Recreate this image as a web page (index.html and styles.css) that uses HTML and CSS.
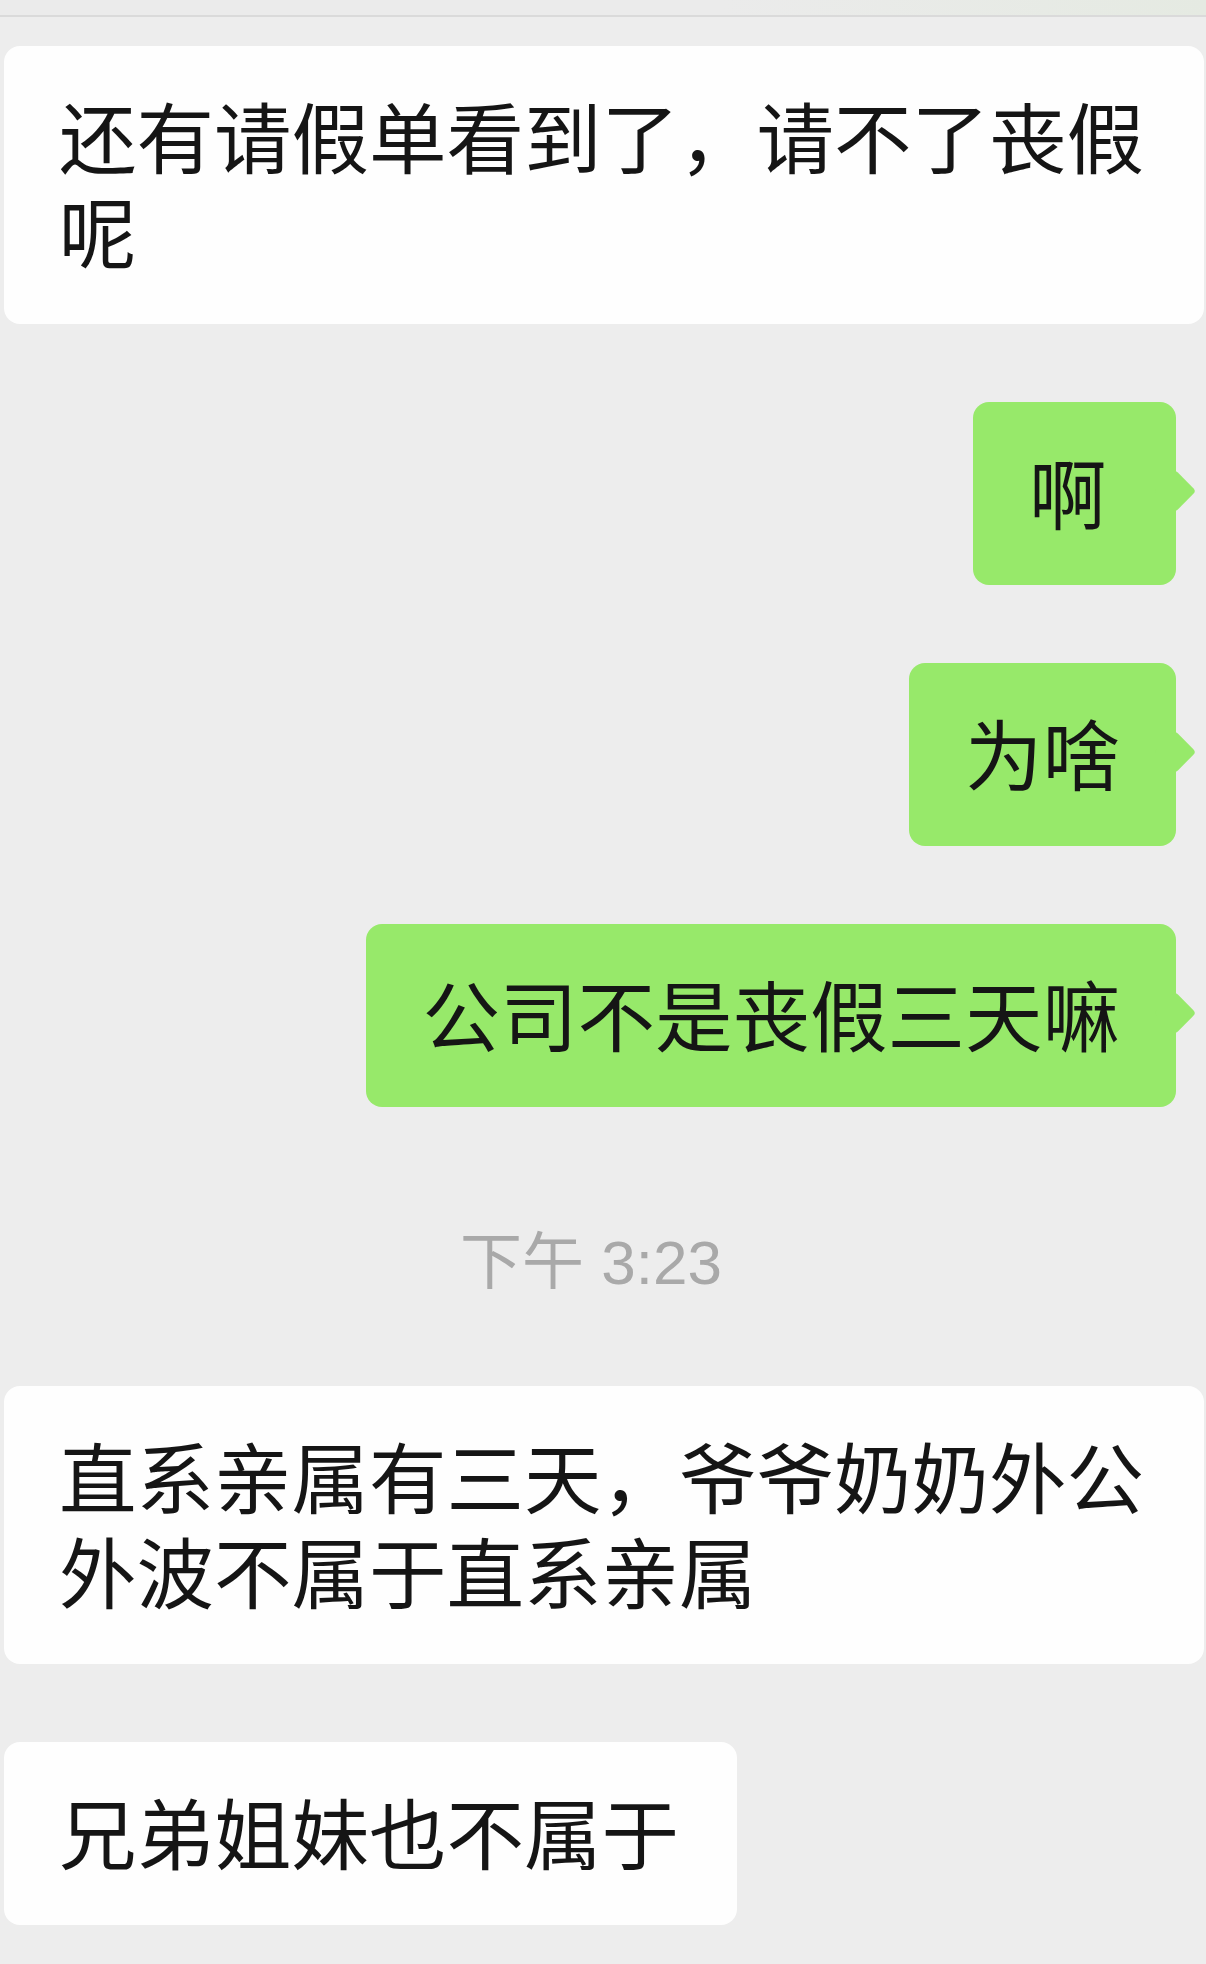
FILE: index.html
```html
<!DOCTYPE html>
<html lang="zh-CN">
<head>
    <meta charset="UTF-8">
    <meta name="viewport" content="width=device-width, initial-scale=1.0">
    <title>聊天记录</title>
    <link rel="stylesheet" href="styles.css">
</head>
<body>
    <div class="top-strip"></div>

    <div class="chat">
        <div class="msg msg-left">
            <div class="bubble bubble-white bubble-wide">还有请假单看到了，请不了丧假呢</div>
        </div>

        <div class="msg msg-right">
            <div class="bubble bubble-green">啊</div>
        </div>

        <div class="msg msg-right">
            <div class="bubble bubble-green">为啥</div>
        </div>

        <div class="msg msg-right">
            <div class="bubble bubble-green">公司不是丧假三天嘛</div>
        </div>

        <div class="time">下午 3:23</div>

        <div class="msg msg-left">
            <div class="bubble bubble-white bubble-wide">直系亲属有三天，爷爷奶奶外公外波不属于直系亲属</div>
        </div>

        <div class="msg msg-left">
            <div class="bubble bubble-white">兄弟姐妹也不属于</div>
        </div>
    </div>
</body>
</html>
```

FILE: styles.css
```css
body {
    margin: 0;
    background-color: #ededed;
    font-family: "Noto Sans CJK SC", "Noto Sans", sans-serif;
    color: #151515;
}
.top-strip {
    height: 15px;
    background: linear-gradient(to right, #ebebeb 60%, #e5eae2);
    border-bottom: 2px solid #dadada;
}
.chat {
    display: flex;
    flex-direction: column;
    padding-top: 29px;
}
.msg {
    display: flex;
    margin-bottom: 78px;
}
.msg-left {
    justify-content: flex-start;
    padding-left: 4px;
}
.msg-right {
    justify-content: flex-end;
    padding-right: 30px;
}
.bubble {
    position: relative;
    box-sizing: border-box;
    font-size: 77.5px;
    line-height: 95px;
    padding: 41px 58px 47px 55px;
    border-radius: 16px;
}
.bubble-white {
    background-color: #fefefe;
}
.bubble-wide {
    width: 1200px;
    padding-right: 50px;
}
.bubble-green {
    background-color: #97e96a;
    min-width: 203px;
    padding-left: 56px;
    padding-right: 56px;
}
.bubble-green::after {
    content: "";
    position: absolute;
    top: 74px;
    right: -14px;
    width: 30px;
    height: 30px;
    background-color: #97e96a;
    border-radius: 4px;
    transform: rotate(45deg);
}
.time {
    margin-top: 41px;
    margin-bottom: 86px;
    padding-right: 24px;
    text-align: center;
    font-family: "Liberation Sans", "Noto Sans CJK SC", sans-serif;
    font-size: 62px;
    line-height: 74px;
    color: #a9a9a9;
}
```
